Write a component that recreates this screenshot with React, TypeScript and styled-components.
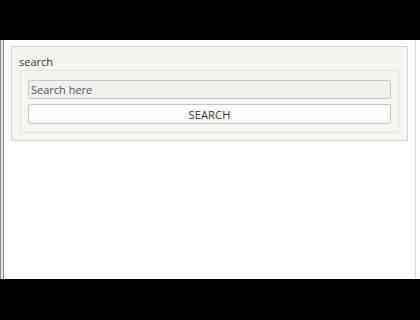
import React from "react";
import styled, { createGlobalStyle } from "styled-components";

const Global = createGlobalStyle`
  html, body { margin: 0; padding: 0; background: #000; }
  body { width: 420px; height: 320px; overflow: hidden; font-family: "Open Sans", "DejaVu Sans", sans-serif; }
`;

const Screen = styled.div`
  width: 420px;
  height: 320px;
  display: flex;
  flex-direction: column;
  background: #000;
`;

const TopBar = styled.div`
  height: 40px;
  flex: none;
  background: #000;
`;

const BottomBar = styled.div`
  flex: 1;
  background: #000;
`;

const Desktop = styled.div`
  height: 239px;
  flex: none;
  display: flex;
  background: #fff;
`;

const BackEdge = styled.div`
  width: 4px;
  flex: none;
  box-sizing: border-box;
  border-left: 1px solid #8a8a8a;
  border-right: 1px solid #8a8a8a;
  background: #e4e4e4;
`;

const Window = styled.div`
  flex: 1;
  display: flex;
  background: #fff;
`;

const Content = styled.div`
  width: 412px;
  box-sizing: border-box;
  padding: 6px 7px 0 7px;
  border-right: 1px solid #dcdcdc;
`;

const Panel = styled.div`
  box-sizing: border-box;
  height: 95px;
  background: #f6f6f1;
  border: 1px solid #d6d6d0;
  padding: 8px 8px 0 8px;
`;

const Label = styled.div`
  font-size: 11px;
  line-height: 14px;
  color: #333;
  margin-left: -1px;
  margin-bottom: 1px;
`;

const Group = styled.div`
  box-sizing: border-box;
  height: 63px;
  border: 1px solid #e2e2dc;
  padding: 9px 7px 0 7px;
  display: flex;
  flex-direction: column;
  gap: 5px;
`;

const Input = styled.input`
  box-sizing: border-box;
  height: 19px;
  width: 100%;
  margin: 0;
  padding: 0 2px;
  border: 1px solid #c8c8c2;
  border-radius: 2px;
  background: #f0f0ec;
  font-family: "Open Sans", "DejaVu Sans", sans-serif;
  font-size: 11px;
  color: #333;
  outline: none;
  &::placeholder { color: #555; }
`;

const Button = styled.button`
  box-sizing: border-box;
  height: 20px;
  width: 100%;
  margin: 0;
  padding: 0;
  border: 1px solid #c8c8c2;
  border-radius: 2px;
  background: linear-gradient(#ffffff, #f7f7f5);
  font-family: "Open Sans", "DejaVu Sans", sans-serif;
  font-size: 11px;
  color: #333;
  letter-spacing: 0.2px;
`;

export default function App() {
  return (
    <>
      <Global />
      <Screen>
        <TopBar />
        <Desktop>
          <BackEdge />
          <Window>
            <Content>
              <Panel>
                <Label>search</Label>
                <Group>
                  <Input placeholder="Search here" />
                  <Button>SEARCH</Button>
                </Group>
              </Panel>
            </Content>
          </Window>
        </Desktop>
        <BottomBar />
      </Screen>
    </>
  );
}
